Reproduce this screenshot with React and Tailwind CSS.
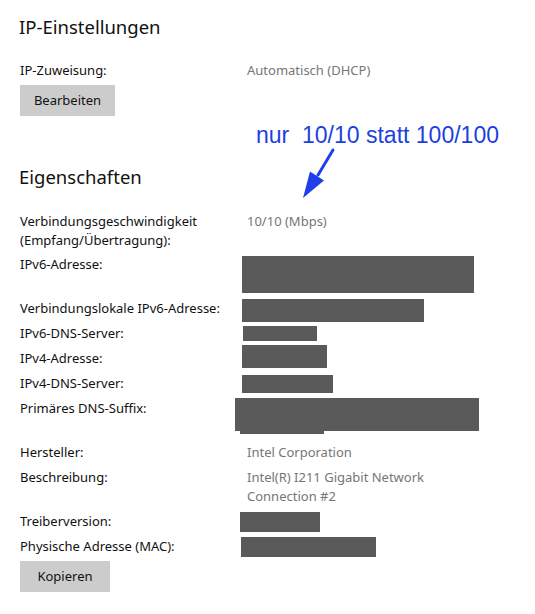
const labelFont = { fontFamily: '"Noto Sans", "Open Sans", sans-serif' };

const Row = ({ label, h, children }) => (
  <div className={`flex ${h}`}>
    <div className="w-[227px] shrink-0 text-[13px] leading-[19px] text-[#111]">{label}</div>
    <div className="flex-1 text-[13px] leading-[19px] text-[#767676]">{children}</div>
  </div>
);

const Redact = ({ cls }) => <div className={`bg-[#5a5a5a] ${cls}`} />;

const Button = ({ children, w }) => (
  <button className={`${w} h-[31px] bg-[#cccccc] text-[13px] text-[#111] flex items-center justify-center`}>
    {children}
  </button>
);

export default function App() {
  return (
    <div className="relative w-[535px] h-[614px] bg-white overflow-hidden" style={labelFont}>
      <div className="flex flex-col pl-[20px] pt-[13px]">
        <h1 className="text-[18.5px] leading-[28px] text-[#111] -ml-[1px]">IP-Einstellungen</h1>

        <div className="mt-[20px]">
          <Row label="IP-Zuweisung:" h="h-[20px]">Automatisch (DHCP)</Row>
        </div>
        <div className="mt-[4px]">
          <Button w="w-[95px]">Bearbeiten</Button>
        </div>

        <div
          className="mt-[6px] ml-[236px] text-[23px] leading-[26px] text-[#1c3fe0]"
          style={{ fontFamily: '"Liberation Sans", Arial, sans-serif' }}
        >
          nur&nbsp; 10/10 statt 100/100
        </div>

        <h2 className="mt-[15px] text-[18.5px] leading-[28px] text-[#111] -ml-[1px]">Eigenschaften</h2>

        <div className="mt-[21px] flex flex-col">
          <Row label={<>Verbindungsgeschwindigkeit<br />(Empfang/Übertragung):</>} h="h-[43px]">
            10/10 (Mbps)
          </Row>
          <Row label="IPv6-Adresse:" h="h-[44px]">
            <Redact cls="mt-[1px] -ml-[5px] w-[232px] h-[37px]" />
          </Row>
          <Row label="Verbindungslokale IPv6-Adresse:" h="h-[25px]">
            <Redact cls="-ml-[5px] w-[182px] h-[23px]" />
          </Row>
          <Row label="IPv6-DNS-Server:" h="h-[25px]">
            <Redact cls="mt-[2px] -ml-[4px] w-[74px] h-[15px]" />
          </Row>
          <Row label="IPv4-Adresse:" h="h-[25px]">
            <Redact cls="-mt-[4px] -ml-[5px] w-[85px] h-[23px]" />
          </Row>
          <Row label="IPv4-DNS-Server:" h="h-[25px]">
            <Redact cls="mt-[1px] -ml-[5px] w-[91px] h-[18px]" />
          </Row>
          <Row label="Primäres DNS-Suffix:" h="h-[44px]">
            <Redact cls="-mt-[1px] -ml-[12px] w-[244px] h-[33px]" />
            <Redact cls="-ml-[7px] w-[84px] h-[3px]" />
          </Row>
          <Row label="Hersteller:" h="h-[25px]">Intel Corporation</Row>
          <Row label="Beschreibung:" h="h-[44px]">
            Intel(R) I211 Gigabit Network
            <br />
            Connection #2
          </Row>
          <Row label="Treiberversion:" h="h-[25px]">
            <Redact cls="-ml-[7px] w-[80px] h-[20px]" />
          </Row>
          <Row label="Physische Adresse (MAC):" h="h-[24px]">
            <Redact cls="-ml-[6px] w-[135px] h-[20px]" />
          </Row>
        </div>

        <div>
          <Button w="w-[90px]">Kopieren</Button>
        </div>
      </div>

      {/* annotation arrow */}
      <svg className="absolute left-0 top-0" width="535" height="614" viewBox="0 0 535 614">
        <line x1="333" y1="150" x2="318" y2="175" stroke="#1f3fe8" strokeWidth="3" strokeLinecap="round" />
        <polygon points="303,198 310,171.5 324,180.5" fill="#1f3fe8" />
      </svg>
    </div>
  );
}
